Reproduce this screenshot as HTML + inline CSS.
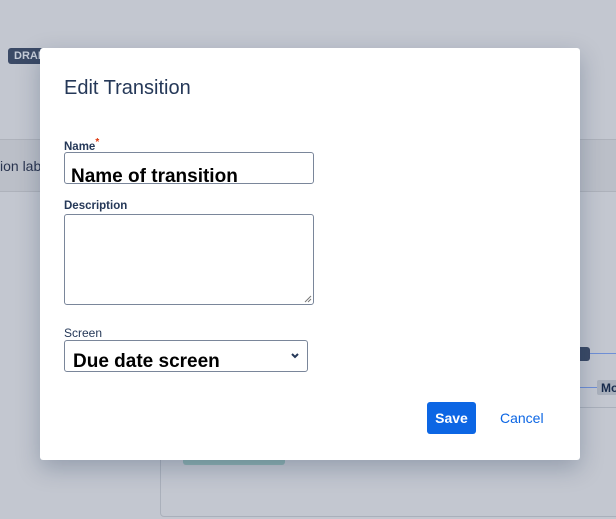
<!DOCTYPE html>
<html><head><meta charset="utf-8"><style>
*{box-sizing:border-box;margin:0;padding:0}
html,body{width:616px;height:519px;overflow:hidden}
body{background:#c3c7d0;font-family:"Liberation Sans",sans-serif;position:relative}
.band{position:absolute;left:0;top:139px;width:616px;height:53px;background:#bbbfc8;border-top:1px solid #aeb2bb;border-bottom:1px solid #aeb2bb}
.draft{position:absolute;left:8px;top:48px;width:40px;height:16px;background:#3b4a66;border-radius:3px;color:#c6ccd8;font-size:11px;font-weight:bold;padding:2px 0 0 6px}
.lab{position:absolute;left:0;top:158px;font-size:14px;color:#2a3550}
.card{position:absolute;left:160px;top:407px;width:470px;height:110px;border:1px solid #aab0bb;border-radius:4px}
.teal{position:absolute;left:183px;top:448px;width:102px;height:17px;background:#8fb3b3;border-radius:3px}
.line{position:absolute;height:1px;background:#6f8fd6}
.modal{position:absolute;left:40px;top:48px;width:540px;height:412px;background:#fff;border-radius:3px;box-shadow:0 8px 24px rgba(9,30,66,.25)}
h1{position:absolute;left:24px;top:29px;font-size:20px;font-weight:normal;color:#253858}
.l{position:absolute;left:24px;font-size:11.5px;font-weight:bold;color:#253858}
.in{position:absolute;left:24px;border:1px solid #7a869a;border-radius:3px;background:#fff}
.v{position:absolute;font-size:19px;font-weight:bold;color:#000}
.save{position:absolute;left:387px;top:354px;width:49px;height:32px;background:#0c66e4;border-radius:3px;color:#fff;font-size:14px;font-weight:bold;text-align:center;line-height:32px}
.cancel{position:absolute;left:460px;top:362px;font-size:14px;color:#0c66e4}
</style></head><body>
<div class="band"></div>
<div class="draft">DRAFT</div>
<div class="lab">ion lab</div>
<div class="card"></div>
<div class="teal"></div>
<div class="line" style="left:560px;top:353px;width:56px"></div>
<div style="position:absolute;left:572px;top:347px;width:18px;height:14px;background:#3b4a66;border-radius:3px"></div>
<div class="line" style="left:575px;top:387px;width:30px"></div>
<div style="position:absolute;left:597px;top:380px;width:30px;height:15px;background:#a9b0bc;border-radius:2px;font-size:12px;font-weight:bold;color:#172b4d;padding:1px 0 0 4px">Mo</div>
<div class="modal">
<h1>Edit Transition</h1>
<div class="l" style="top:89px">Name<span style="color:#de350b;vertical-align:5px;font-size:10px">*</span></div>
<div class="in" style="top:104px;width:250px;height:32px"></div>
<div class="v" style="left:31px;top:118px">Name of transition</div>
<div class="l" style="top:152px">Description</div>
<div class="in" style="top:166px;width:250px;height:91px">
<svg style="position:absolute;right:1px;bottom:1px" width="8" height="8"><path d="M7 1L1 7M7 4L4 7" stroke="#777" stroke-width="1"/></svg></div>
<div class="l" style="top:278px;font-weight:normal;font-size:12px">Screen</div>
<div class="in" style="top:292px;width:244px;height:32px"></div>
<div class="v" style="left:33px;top:303px">Due date screen</div>
<svg style="position:absolute;left:250px;top:304px" width="10" height="8"><path d="M2 2L5 5L8 2" stroke="#253858" stroke-width="2" fill="none"/></svg>
<div class="save">Save</div>
<div class="cancel">Cancel</div>
</div>
</body></html>
